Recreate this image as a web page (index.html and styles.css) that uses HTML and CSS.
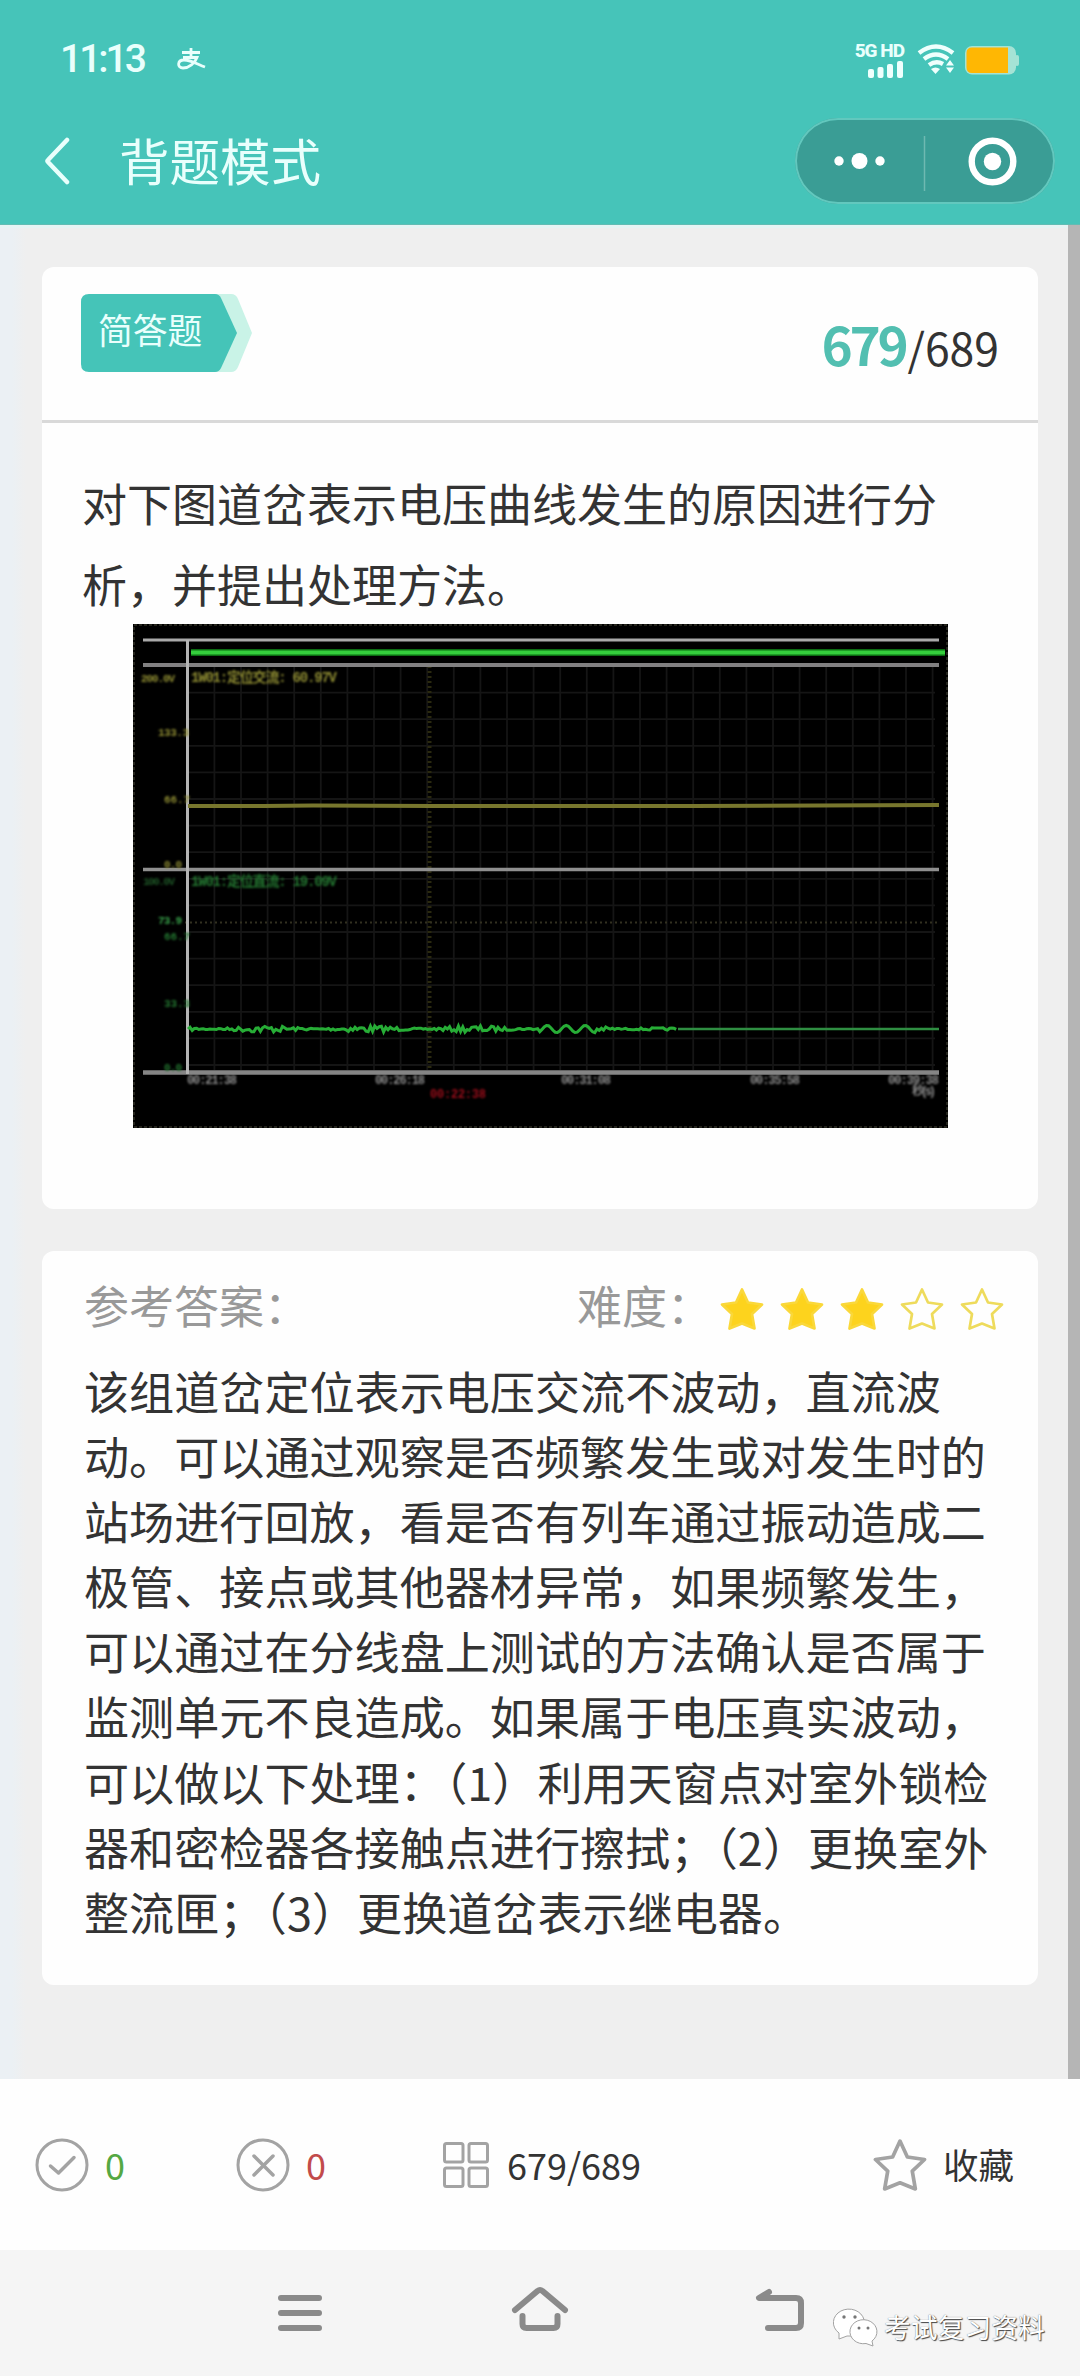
FILE: index.html
```html
<!DOCTYPE html>
<html lang="zh-CN">
<head>
  <meta charset="UTF-8" />
  <meta name="viewport" content="width=device-width, initial-scale=1.0" />
  <title>背题模式</title>
  <link rel="stylesheet" href="styles.css">
</head>
<body>

  <header class="header">
    <div class="status-bar">
      <span class="clock">11:13</span>
      <span class="pay">
        <svg width="30" height="24" viewBox="0 0 30 24" fill="none" stroke="#e9fffc" stroke-width="2.8">
          <path d="M5 5.500H23M14 1V10M6 10.500H20C18 16 12 21 6 21C0 21 0 13 7 13C14 13 20 17 28 20" />
        </svg>
      </span>
      <div class="signal">
        <span class="net">5G HD</span>
        <svg width="36" height="17" viewBox="0 0 36 17" fill="#effffd">
          <rect x="0" y="8" width="6" height="9" rx="2" />
          <rect x="9.500" y="6" width="6" height="11" rx="2" />
          <rect x="19" y="3" width="6" height="14" rx="2" />
          <rect x="29" y="0" width="6" height="17" rx="2" />
        </svg>
      </div>
      <svg class="wifi" width="38" height="30" viewBox="0 0 38 30" fill="none" stroke="#effffd" stroke-width="4.400">
        <path d="M2 9Q19 -4 36 9" />
        <path d="M7 15Q19 6 31 15" />
        <path d="M12 21Q19 16 26 20" />
        <path d="M14 25Q18.500 22 23 25L18.500 30Z" fill="#effffd" stroke="none" />
        <path d="M33 16L37 21.500H29ZM33 29L37 23.500H29Z" fill="#effffd" stroke="none" />
      </svg>
      <svg class="battery" width="55" height="29" viewBox="0 0 55 29">
        <rect x="0" y="0" width="51" height="28.500" rx="7" fill="#a5e3d5" />
        <rect x="50" y="9" width="4" height="11" rx="2" fill="#a5e3d5" />
        <path d="M7 1.500H43V27H7Q1.500 27 1.500 21V7Q1.500 1.500 7 1.500Z" fill="#ffb703" />
      </svg>
    </div>
    <div class="title-bar">
      <svg class="back" width="26" height="48" viewBox="0 0 26 48" fill="none" stroke="#e9fffc" stroke-width="4.500" stroke-linecap="round" stroke-linejoin="round">
        <path d="M22 3L3 23Q2 24 3 25L22 45" />
      </svg>
      <h1>背题模式</h1>
      <div class="capsule">
        <svg width="260" height="86" viewBox="0 0 260 86" fill="#fff">
          <circle cx="44" cy="43" r="4.700" />
          <circle cx="64.500" cy="43" r="8" />
          <circle cx="85" cy="43" r="4.700" />
          <path d="M129.500 18V73" stroke="#6fb9b1" stroke-width="1.500" />
          <circle cx="197.500" cy="43.500" r="20.800" fill="none" stroke="#fff" stroke-width="6.400" />
          <circle cx="197.500" cy="43.500" r="8.700" />
        </svg>
      </div>
    </div>
  </header>

  <main class="content">
    <section class="card question">
      <div class="question-head">
        <div class="tag">
          <svg class="tag-bg" width="172" height="78" viewBox="0 0 172 78">
            <path d="M120 0H150Q155 0 157 5L171 39L157 73Q155 78 150 78H120Z" fill="#c9f3e7" />
            <path d="M8 0H134Q138 0 140 4L156 39L140 74Q138 78 134 78H8Q0 78 0 70V8Q0 0 8 0Z" fill="#45c4b8" />
          </svg>
          <span>简答题</span>
        </div>
        <div class="counter"><b>679</b>/689</div>
      </div>
      <div class="question-body">
        <p>对下图道岔表示电压曲线发生的原因进行分<br>析，并提出处理方法。</p>
        <svg class="chart" width="815" height="504" viewBox="0 0 815 504">
          <rect width="815" height="504" fill="#000" />
          <rect x="1" y="1" width="813" height="502" fill="none" stroke="#24241c" stroke-width="2" stroke-dasharray="3 2" />
          <g id="grid" stroke="#151515" stroke-width="1.800"></g>
          <g stroke-width="2" stroke-dasharray="2 3" fill="none">
            <path d="M296.500 42V446" stroke="#2a290f" stroke-width="4" />
            <path d="M52 298.500H806" stroke="#323020" />
          </g>
          <g class="lines" fill="none">
            <path d="M10 16H806" stroke="#a9a9a9" stroke-width="3" />
            <path d="M58 28.500H812" stroke="#0b6b12" stroke-width="7" />
            <path d="M58 28.500H812" stroke="#35cf3d" stroke-width="4" />
            <path d="M10 41H806" stroke="#818081" stroke-width="4" />
            <path d="M10 245.500H806" stroke="#8f8f8f" stroke-width="3.500" />
            <path d="M10 448.500H806" stroke="#858585" stroke-width="4.500" />
            <path d="M54.500 16V450" stroke="#b4b4b4" stroke-width="3" />
            <path d="M55 182H130L180 181.500L300 182H480L560 182L806 181" stroke="#77762d" stroke-width="4" />
            <path id="wave" stroke="#27ad36" stroke-width="3" />
            <path d="M545 405H806" stroke="#2f8e42" stroke-width="2.500" />
          </g>
          <g class="labels" fill="#8c8a32">
            <text x="8" y="58" textLength="34">200.0V</text>
            <text x="25" y="112" textLength="31">133.3</text>
            <text x="31" y="179" textLength="26">66.7</text>
            <text x="31" y="244" textLength="18">0.0</text>
            <text class="big" x="58" y="58" textLength="146">1W01:定位交流: 60.97V</text>
          </g>
          <g class="labels" fill="#237530">
            <text x="10" y="261" textLength="32" fill="#1d5225">100.0V</text>
            <text x="25" y="300" textLength="24" fill="#38a14a">73.9</text>
            <text x="31" y="316" textLength="26">66.7</text>
            <text x="31" y="383" textLength="26">33.3</text>
            <text x="31" y="447" textLength="18">0.0</text>
            <text class="big" x="58" y="262" textLength="146">1W01:定位直流: 19.09V</text>
          </g>
          <g class="labels time" fill="#8b8b8b">
            <text x="54" y="460" textLength="50">00:21:38</text>
            <text x="242" y="460" textLength="50">00:26:18</text>
            <text x="428" y="460" textLength="50">00:31:08</text>
            <text x="617" y="460" textLength="50">00:35:58</text>
            <text x="755" y="460" textLength="51">00:39:38</text>
            <text x="779" y="471" textLength="24">秒(s)</text>
            <text x="297" y="474" textLength="56" fill="#9c0d1a">00:22:38</text>
          </g>
        </svg>
      </div>
    </section>

    <section class="card answer">
      <div class="answer-head">
        <span>参考答案：</span>
        <span class="level">难度：</span>
        <div class="stars">
          <svg class="star on" viewBox="0 0 44 44"><use href="#star-shape" /></svg>
          <svg class="star on" viewBox="0 0 44 44"><use href="#star-shape" /></svg>
          <svg class="star on" viewBox="0 0 44 44"><use href="#star-shape" /></svg>
          <svg class="star" viewBox="0 0 44 44"><use href="#star-shape" /></svg>
          <svg class="star" viewBox="0 0 44 44"><use href="#star-shape" /></svg>
        </div>
      </div>
      <p>该组道岔定位表示电压交流不波动，直流波<br>动。可以通过观察是否频繁发生或对发生时的<br>站场进行回放，看是否有列车通过振动造成二<br>极管、接点或其他器材异常，如果频繁发生，<br>可以通过在分线盘上测试的方法确认是否属于<br>监测单元不良造成。如果属于电压真实波动，<br>可以做以下处理：（1）利用天窗点对室外锁检<br>器和密检器各接触点进行擦拭；（2）更换室外<br>整流匣；（3）更换道岔表示继电器。</p>
    </section>
    <div class="scrollbar"></div>
  </main>

  <footer class="toolbar">
    <div class="tool right-count">
      <svg width="54" height="54" viewBox="0 0 54 54" class="icon">
        <circle cx="27" cy="27" r="25" />
        <path d="M15.500 28L23.500 35L39 19.500" stroke-width="3.500" />
      </svg>
      <span>0</span>
    </div>
    <div class="tool wrong-count">
      <svg width="54" height="54" viewBox="0 0 54 54" class="icon">
        <circle cx="27" cy="27" r="25" />
        <path d="M18 18L37 37M37 18L18 37" stroke-width="3.500" />
      </svg>
      <span>0</span>
    </div>
    <div class="tool sheet">
      <svg width="46" height="46" viewBox="0 0 46 46" class="icon">
        <rect x="1.500" y="1.500" width="18.500" height="18.500" rx="2" />
        <rect x="26" y="1.500" width="18.500" height="18.500" rx="2" />
        <rect x="1.500" y="26" width="18.500" height="18.500" rx="2" />
        <rect x="26" y="26" width="18.500" height="18.500" rx="2" />
      </svg>
      <span>679/689</span>
    </div>
    <div class="tool fav">
      <svg width="54" height="54" viewBox="0 0 44 44" class="icon"><use href="#star-shape" /></svg>
      <span>收藏</span>
    </div>
  </footer>

  <nav class="sys-nav">
    <svg width="60" height="60" viewBox="0 0 60 60"><path d="M11 15H49M11 30H49M11 45H49" /></svg>
    <svg width="60" height="60" viewBox="0 0 60 60"><path d="M5 27L27.500 8Q30 6 32.500 8L55 27M12.500 33V41Q12.500 45 16.500 45H43.500Q47.500 45 47.500 41V33" /></svg>
    <svg width="60" height="60" viewBox="0 0 60 60"><path d="M19 9L9 15H46Q51 15 51 20V40Q51 45 46 45H18" /></svg>
    <div class="watermark">
      <svg width="45" height="40" viewBox="0 0 45 40" fill="#fff" stroke="#a2a2a2" stroke-width="1">
        <path d="M6 26A15.500 13.500 0 1 1 14 29L6 32Z" />
        <path d="M39 34A13.500 12 0 1 0 33 36.500L40 39Z" />
        <g fill="#777" stroke="none">
          <circle cx="11" cy="10" r="1.700" /><circle cx="22" cy="10" r="1.700" />
          <circle cx="26" cy="21" r="1.500" /><circle cx="35" cy="21" r="1.500" />
        </g>
      </svg>
      <span>考试复习资料</span>
    </div>
  </nav>

  <svg width="0" height="0" class="defs">
    <defs>
      <path id="star-shape" d="M22 2.500L28 15.500L42 17.500L32 27L34.500 41.500L22 36.500L9.500 41.500L12 27L2 17.500L16 15.500Z" />
    </defs>
  </svg>

  <script>
    // chart grid
    let lines = '';
    for (let x = 81.4; x < 806; x += 26.6) lines += `<path d="M${x.toFixed(1)} 43V446" />`;
    for (let y = 68.6; y < 446; y += 26.6) lines += `<path d="M56 ${y.toFixed(1)}H802" />`;
    document.getElementById('grid').innerHTML = lines;

    // dc voltage curve
    let d = 'M55 405';
    let seed = 7;
    for (let x = 57; x < 545; x += 2.2) {
      seed = (seed * 16807) % 2147483647;
      let amp = x > 515 ? 1.2 : 2.2 + Math.sin(x * 0.06) * 1.4;
      let y = 405 + (seed / 2147483647 - 0.5) * 2 * amp;
      if (x > 405 && x < 462) y = 405 + Math.sin(x * 0.33) * 3.6;
      d += `L${x.toFixed(1)} ${y.toFixed(1)}`;
    }
    document.getElementById('wave').setAttribute('d', d);
  </script>

</body>
</html>
```
FILE: styles.css
```css
* {
  box-sizing: border-box;
}
body {
  margin: 0;
  width: 1080px;
  height: 2376px;
  overflow: hidden;
  display: flex;
  flex-direction: column;
  background: #f5f5f5;
  color: #333;
  font-family: 'Noto Sans CJK SC', sans-serif;
}
svg {
  display: block;
  flex-shrink: 0;
}
.defs {
  position: absolute;
}
h1, p {
  margin: 0;
  font-weight: 400;
}

/* header */
.header {
  height: 225px;
  flex-shrink: 0;
  background: #46c4b9;
  border-bottom: 1px solid #62bcb3;
  color: #e9fffc;
}
.status-bar {
  height: 118px;
  padding: 0 60px;
  display: flex;
  align-items: center;
}
.clock {
  font-family: Roboto, sans-serif;
  font-size: 39px;
  font-weight: 500;
  letter-spacing: -3px;
  width: 117px;
}
.signal {
  margin-left: auto;
  display: flex;
  flex-direction: column;
  align-items: flex-end;
  width: 50px;
}
.net {
  font-family: Roboto, sans-serif;
  font-size: 19px;
  font-weight: 800;
  letter-spacing: -1px;
  line-height: 21px;
  white-space: nowrap;
}
.wifi {
  margin-left: 13px;
}
.battery {
  margin: 2px 0 0 10px;
}
.title-bar {
  height: 86px;
  display: flex;
  align-items: center;
  padding: 0 25px 0 45px;
}
.title-bar h1 {
  margin: -4px 0 0 48px;
  font-size: 50.5px;
  line-height: 70px;
}
.capsule {
  margin-left: auto;
  width: 260px;
  height: 86px;
  border-radius: 43px;
  background: #3a9d95;
  box-shadow: inset 0 0 0 2px #62c8be;
}

/* content */
.content {
  position: relative;
  height: 1854px;
  flex-shrink: 0;
  padding: 39px 42px 0;
  background: linear-gradient(90deg, #ebf0f4 0, #ebf0f4 12px, #efefef 26px);
  border-top: 3px solid #e6f4f4;
}
.scrollbar {
  position: absolute;
  top: -3px;
  right: 0;
  bottom: 0;
  width: 12px;
  background: #b5b5b5;
}
.card {
  background: #fefefe;
  border-radius: 12px;
}
.question {
  height: 942px;
}
.question-head {
  height: 156px;
  border-bottom: 3px solid #d9d9d9;
  display: flex;
  justify-content: space-between;
  padding: 27px 39px 0 39px;
}
.tag {
  position: relative;
  width: 172px;
  height: 78px;
  padding-left: 17px;
  font-size: 34.8px;
  line-height: 71px;
  color: #e9fffc;
}
.tag-bg {
  position: absolute;
  left: 0;
  top: 0;
}
.tag span {
  position: relative;
}
.counter {
  font-size: 44.5px;
  line-height: 98px;
}
.counter b {
  color: #52bfb1;
  font-size: 53px;
  letter-spacing: -3.3px;
  margin-right: 2px;
}
.question-body {
  padding: 39px 40px 0;
}
.question-body p {
  font-size: 45px;
  line-height: 81px;
  white-space: nowrap;
}
.chart {
  margin-left: 51px;
}
.chart .lines {
  filter: blur(0.5px);
}
.labels {
  font-family: 'Liberation Mono', 'Noto Sans CJK SC', monospace;
  font-size: 11px;
  font-weight: 700;
  filter: blur(0.9px);
}
.labels .big {
  font-size: 14px;
}
.time {
  font-size: 12px;
}

.answer {
  margin-top: 42px;
  height: 734px;
  padding: 17px 34px 0 42px;
}
.answer-head {
  display: flex;
  align-items: center;
  height: 72px;
  font-size: 45px;
  color: #999;
}
.level {
  margin-left: 268px;
  white-space: nowrap;
}
.stars {
  display: flex;
  gap: 16px;
  margin: 9px 0 0 auto;
}
.star {
  width: 44px;
  height: 44px;
  fill: none;
  stroke: #eedb5c;
  stroke-width: 2.7;
  stroke-linejoin: round;
}
.star.on {
  fill: #fdd31d;
  stroke: #fad83a;
}
.answer p {
  margin-top: 18px;
  font-size: 45.1px;
  line-height: 65.1px;
  white-space: nowrap;
}

/* bottom toolbar */
.toolbar {
  height: 171px;
  flex-shrink: 0;
  background: #fefefe;
  display: grid;
  grid-template-columns: 201px 207px 430px 1fr;
  padding-left: 35px;
  align-items: center;
  font-size: 36px;
}
.tool {
  display: flex;
  align-items: center;
}
.tool span {
  margin: -2px 0 0 16px;
  line-height: 50px;
}
.icon {
  fill: none;
  stroke: #a3a3a3;
  stroke-width: 3;
  stroke-linecap: round;
  stroke-linejoin: round;
}
.right-count span {
  color: #55a843;
}
.wrong-count span {
  color: #c24b4b;
}
.sheet span {
  margin-left: 18px;
}
.fav span {
  font-size: 35.5px;
}

/* system navigation */
.sys-nav {
  position: relative;
  height: 126px;
  flex-shrink: 0;
  display: flex;
  justify-content: center;
  gap: 180px;
  padding-top: 33px;
  background: #f5f5f5;
}
.sys-nav > svg {
  fill: none;
  stroke: #8a8a8a;
  stroke-width: 6;
  stroke-linecap: round;
  stroke-linejoin: round;
}
.watermark {
  position: absolute;
  left: 833px;
  top: 55px;
  display: flex;
  align-items: center;
  gap: 6px;
}
.watermark span {
  font-size: 26.8px;
  line-height: 44px;
  color: #fff;
  text-shadow: 1px 1px 1px #444, 0 0 1px #666;
}
```
